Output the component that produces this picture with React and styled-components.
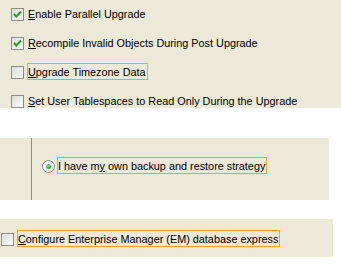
import styled, { createGlobalStyle } from 'styled-components';

const Global = createGlobalStyle`
  html, body {
    margin: 0;
    padding: 0;
    background: #fff;
  }
  body {
    font-family: "Liberation Sans", Arial, sans-serif;
    font-size: 10.85px;
    color: #000;
  }
`

const Page = styled.div`
  width: 341px;
  height: 274px;
  display: flex;
  flex-direction: column;
  overflow: hidden;
`

const Panel = styled.div`
  background: #ece9d8;
  width: ${p => p.width}px;
  height: ${p => p.height}px;
  margin-bottom: ${p => p.gap || 0}px;
  box-sizing: border-box;
  display: flex;
`

const OptionList = styled.div`
  display: flex;
  flex-direction: column;
  gap: 12px;
  padding: 5px 0 0 11px;
`

const Row = styled.label`
  display: flex;
  align-items: center;
  height: 17px;
`

const Box = styled.span`
  width: 13px;
  height: 13px;
  box-sizing: border-box;
  border: 1px solid #8d8d8a;
  background: linear-gradient(135deg, #dcdcd5 0%, #f0f0ec 60%, #fff 100%);
  display: flex;
  align-items: center;
  justify-content: center;
  margin-right: 3px;
  margin-top: 2px;
  flex-shrink: 0;
`

const Caption = styled.span`
  height: 17px;
  box-sizing: border-box;
  border: 1px solid ${p => (p.focused ? '#f5a623' : 'transparent')};
  padding: 1px 1px 0 0;
  line-height: 15px;
  white-space: nowrap;
`

const Divider = styled.div`
  width: 1px;
  background: #8c8c8c;
  margin-left: 31px;
`

const RadioArea = styled.div`
  display: flex;
  align-items: center;
  padding: 0 0 8px 10px;
`

const Radio = styled.span`
  width: 13px;
  height: 13px;
  box-sizing: border-box;
  border-radius: 50%;
  border: 1px solid #8e8f8f;
  background: radial-gradient(circle at 40% 40%, #fff 0%, #f2f2ee 60%, #d8d8d2 100%);
  display: flex;
  align-items: center;
  justify-content: center;
  margin-right: 2px;
  margin-top: 2px;
`

const Dot = styled.span`
  width: 5px;
  height: 5px;
  border-radius: 50%;
  background: radial-gradient(circle at 35% 35%, #8fe08f 0%, #2fae2f 60%, #1a8a1a 100%);
`

const Bottom = styled.div`
  display: flex;
  align-items: center;
  padding: 0 0 0 1px;
`

const Check = () => (
  <svg width="9" height="9" viewBox="0 0 9 9">
    <path d="M1 4 L3.3 6.5 L8 1.5" fill="none" stroke="#21a121" strokeWidth="2" />
  </svg>
)

const Mn = ({ k, rest }) => (
  <>
    <u>{k}</u>
    {rest}
  </>
)

const options = [
  { k: 'E', rest: 'nable Parallel Upgrade', checked: true },
  { k: 'R', rest: 'ecompile Invalid Objects During Post Upgrade', checked: true },
  { k: 'U', rest: 'pgrade Timezone Data', focused: true },
  { k: 'S', rest: 'et User Tablespaces to Read Only During the Upgrade' },
]

export default function App() {
  return (
    <Page>
      <Global />
      <Panel width={341} height={108} gap={30}>
        <OptionList>
          {options.map(o => (
            <Row key={o.k}>
              <Box>{o.checked && <Check />}</Box>
              <Caption focused={o.focused}>
                <Mn k={o.k} rest={o.rest} />
              </Caption>
            </Row>
          ))}
        </OptionList>
      </Panel>
      <Panel width={329} height={62} gap={19}>
        <Divider />
        <RadioArea>
          <Radio><Dot /></Radio>
          <Caption focused>I have m<u>y</u> own backup and restore strategy</Caption>
        </RadioArea>
      </Panel>
      <Panel width={333} height={38}>
        <Bottom>
          <Box><span /></Box>
          <Caption focused>
            <Mn k="C" rest="onfigure Enterprise Manager (EM) database express" />
          </Caption>
        </Bottom>
      </Panel>
    </Page>
  )
}
